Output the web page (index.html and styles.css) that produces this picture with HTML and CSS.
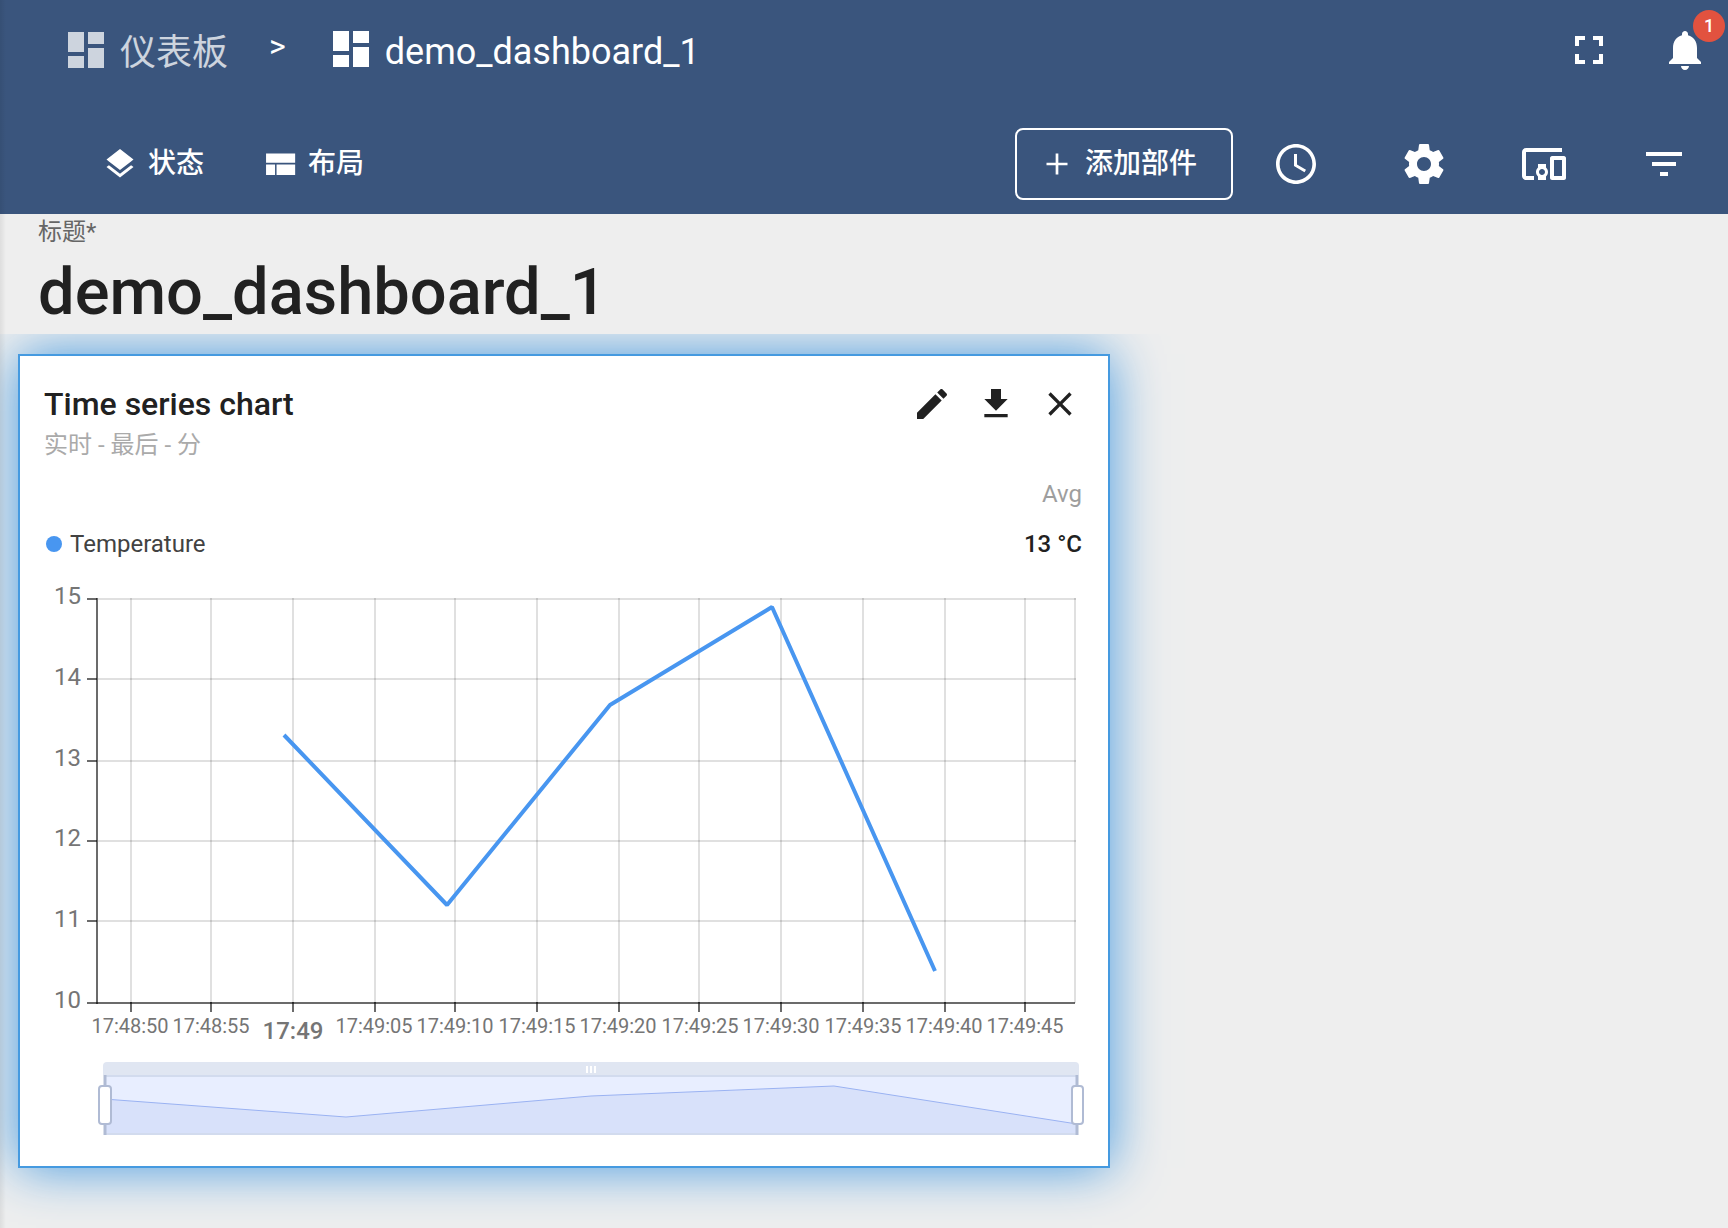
FILE: index.html
```html
<!DOCTYPE html>
<html lang="zh-CN">
<head>
<meta charset="utf-8">
<meta name="viewport" content="width=device-width, initial-scale=1">
<title>demo_dashboard_1</title>
<link rel="stylesheet" href="styles.css">
</head>
<body class="page">
<header class="header">
  <div class="topbar">
    <nav class="breadcrumb" aria-label="breadcrumb">
      <a class="crumb crumb-parent" href="#">
        <svg class="icon" viewBox="0 0 24 24"><path d="M3 13h8V3H3v10zm0 8h8v-6H3v6zm10 0h8V11h-8v10zm0-18v6h8V3h-8z"/></svg>
        <span class="crumb-text">仪表板</span>
      </a>
      <span class="crumb-separator">&gt;</span>
      <a class="crumb crumb-current" href="#">
        <svg class="icon" viewBox="0 0 24 24"><path d="M3 13h8V3H3v10zm0 8h8v-6H3v6zm10 0h8V11h-8v10zm0-18v6h8V3h-8z"/></svg>
        <span class="crumb-text">demo_dashboard_1</span>
      </a>
    </nav>
    <div class="top-actions">
      <button class="icon-button" type="button" aria-label="全屏">
        <svg class="icon" viewBox="0 0 24 24"><path d="M7 14H5v5h5v-2H7v-3zm-2-4h2V7h3V5H5v5zm12 7h-3v2h5v-5h-2v3zM14 5v2h3v3h2V5h-5z"/></svg>
      </button>
      <button class="icon-button" type="button" aria-label="通知">
        <svg class="icon" viewBox="0 0 24 24"><path d="M12 22c1.1 0 2-.9 2-2h-4c0 1.1.89 2 2 2zm6-6v-5c0-3.070-1.640-5.640-4.500-6.320V4c0-.83-.67-1.500-1.500-1.500s-1.500.67-1.500 1.500v.68C7.630 5.360 6 7.920 6 11v5l-2 2v1h16v-1l-2-2z"/></svg>
        <span class="badge">1</span>
      </button>
    </div>
  </div>
  <div class="toolbar">
    <div class="toolbar-left">
      <button class="text-button" type="button">
        <svg class="icon icon-small" viewBox="0 0 24 24"><path d="M11.990 18.540l-7.370-5.730L3 14.070l9 7 9-7-1.630-1.270-7.380 5.740zM12 16l7.360-5.730L21 9l-9-7-9 7 1.630 1.270L12 16z"/></svg>
        <span>状态</span>
      </button>
      <button class="text-button" type="button">
        <svg class="icon icon-small" viewBox="0 0 24 24"><path d="M2.700 5h19.400v6.200H2.700zM2.700 12.400h6v6.900h-6zM9.700 12.400h12.400v6.900H9.700z"/></svg>
        <span>布局</span>
      </button>
    </div>
    <div class="toolbar-right">
      <button class="add-button" type="button">
        <svg class="icon icon-small" viewBox="0 0 24 24"><path d="M19 12.900h-6.100V19h-1.800v-6.100H5v-1.800h6.100V5h1.800v6.100H19z"/></svg>
        <span>添加部件</span>
      </button>
      <div class="tools">
        <button class="icon-button icon-button-wide" type="button" aria-label="时间窗口">
          <svg class="icon" viewBox="0 0 24 24"><path d="M11.990 2C6.470 2 2 6.480 2 12s4.470 10 9.990 10C17.520 22 22 17.520 22 12S17.520 2 11.990 2zM12 20.200c-4.530 0-8.200-3.670-8.200-8.200S7.470 3.800 12 3.800s8.200 3.670 8.200 8.200-3.670 8.200-8.200 8.200zM12.500 7H11v6l5.250 3.150.75-1.230-4.500-2.670z"/></svg>
        </button>
        <button class="icon-button" type="button" aria-label="设置">
          <svg class="icon" viewBox="0 0 24 24"><path d="M19.430 12.980c.04-.32.07-.64.07-.98s-.03-.66-.07-.98l2.110-1.650c.19-.15.24-.42.12-.64l-2-3.460c-.12-.22-.39-.3-.61-.22l-2.490 1c-.52-.4-1.080-.73-1.690-.98l-.38-2.650C14.460 2.180 14.250 2 14 2h-4c-.25 0-.46.18-.49.42l-.38 2.650c-.61.25-1.170.59-1.690.98l-2.490-1c-.23-.09-.49 0-.61.22l-2 3.460c-.13.22-.07.49.12.64l2.110 1.650c-.04.32-.07.65-.07.98s.03.66.07.98l-2.110 1.650c-.19.15-.24.42-.12.64l2 3.460c.12.22.39.3.61.22l2.490-1c.52.4 1.080.73 1.690.98l.38 2.650c.03.24.24.42.49.42h4c.25 0 .46-.18.49-.42l.38-2.650c.61-.25 1.170-.59 1.690-.98l2.490 1c.23.09.49 0 .61-.22l2-3.460c.12-.22.07-.49-.12-.64l-2.110-1.650zM12 15.500c-1.930 0-3.500-1.570-3.500-3.500s1.570-3.500 3.500-3.500 3.500 1.570 3.500 3.500-1.570 3.500-3.500 3.500z"/></svg>
        </button>
        <button class="icon-button" type="button" aria-label="实体别名">
          <svg class="icon" viewBox="0 0 24 24"><path d="M3 6h18V4H3c-1.100 0-2 .9-2 2v12c0 1.100.9 2 2 2h4v-2H3V6zm10 6H9v1.780c-.61.55-1 1.330-1 2.220s.39 1.670 1 2.220V20h4v-1.780c.61-.55 1-1.340 1-2.220s-.39-1.670-1-2.220V12zm-2 5.500c-.83 0-1.500-.67-1.500-1.500s.67-1.500 1.500-1.500 1.500.67 1.500 1.500-.67 1.500-1.500 1.500zM22 8h-6c-.5 0-1 .5-1 1v10c0 .5.5 1 1 1h6c.5 0 1-.5 1-1V9c0-.5-.5-1-1-1zm-1 10h-4v-8h4v8z"/></svg>
        </button>
        <button class="icon-button" type="button" aria-label="过滤器">
          <svg class="icon" viewBox="0 0 24 24"><path d="M10 18h4v-2h-4v2zM3 6v2h18V6H3zm3 7h12v-2H6v2z"/></svg>
        </button>
      </div>
    </div>
  </div>
</header>

<main class="dashboard">
  <div class="title-field">
    <label class="title-label" for="dashboard-title">标题*</label>
    <input class="title-input" id="dashboard-title" type="text" value="demo_dashboard_1" required>
  </div>
  <div class="grid">
    <section class="widget">
      <div class="widget-header">
        <div class="widget-titles">
          <h2 class="widget-title">Time series chart</h2>
          <p class="widget-subtitle">实时 - 最后 - 分</p>
        </div>
        <div class="widget-actions">
          <button class="widget-button" type="button" aria-label="编辑">
            <svg class="icon icon-medium" viewBox="0 0 24 24"><path d="M3 17.250V21h3.750L17.810 9.940l-3.750-3.750L3 17.250zM20.710 7.040c.39-.39.39-1.020 0-1.410l-2.340-2.340c-.39-.39-1.020-.39-1.410 0l-1.830 1.830 3.750 3.750 1.830-1.830z"/></svg>
          </button>
          <button class="widget-button" type="button" aria-label="下载">
            <svg class="icon icon-medium" viewBox="0 0 24 24"><path d="M19 9h-4V3H9v6H5l7 7 7-7zM5 18v2h14v-2H5z"/></svg>
          </button>
          <button class="widget-button" type="button" aria-label="移除">
            <svg class="icon icon-medium" viewBox="0 0 24 24"><path d="M19 6.410L17.590 5 12 10.590 6.410 5 5 6.410 10.590 12 5 17.590 6.410 19 12 13.410 17.590 19 19 17.590 13.410 12z"/></svg>
          </button>
        </div>
      </div>
      <table class="legend">
        <thead>
          <tr><td></td><th class="legend-column" scope="col">Avg</th></tr>
        </thead>
        <tbody>
          <tr>
            <th class="legend-name" scope="row"><span class="legend-key"><span class="legend-dot"></span>Temperature</span></th>
            <td class="legend-value">13 °C</td>
          </tr>
        </tbody>
      </table>
      <svg class="chart" viewBox="0 0 1088 590" role="img" aria-label="Temperature">
        <path class="chart-grid" d="M78 23H1056M78 103H1056M78 185H1056M78 265H1056M78 345H1056"/>
        <path class="chart-grid" d="M111 22V427M191 22V427M273 22V427M355 22V427M435 22V427M517 22V427M599 22V427M679 22V427M761 22V427M843 22V427M925 22V427M1005 22V427M1055 22V427"/>
        <path class="chart-axis" d="M77 22V428"/>
        <path class="chart-axis" d="M77 427H1055"/>
        <path class="chart-axis" d="M67 23H77M67 103H77M67 185H77M67 265H77M67 345H77M67 427H77"/>
        <path class="chart-axis" d="M111 426V436M191 426V436M273 426V436M355 426V436M435 426V436M517 426V436M599 426V436M679 426V436M761 426V436M843 426V436M925 426V436M1005 426V436"/>
        <g class="chart-y-labels">
          <text x="61" y="28">15</text>
          <text x="61" y="109">14</text>
          <text x="61" y="190">13</text>
          <text x="61" y="270">12</text>
          <text x="61" y="351">11</text>
          <text x="61" y="432">10</text>
        </g>
        <g class="chart-x-labels">
          <text x="110" y="457">17:48:50</text>
          <text x="191" y="457">17:48:55</text>
          <text class="chart-x-major" x="273" y="463">17:49</text>
          <text x="354" y="457">17:49:05</text>
          <text x="435" y="457">17:49:10</text>
          <text x="517" y="457">17:49:15</text>
          <text x="598" y="457">17:49:20</text>
          <text x="680" y="457">17:49:25</text>
          <text x="761" y="457">17:49:30</text>
          <text x="843" y="457">17:49:35</text>
          <text x="924" y="457">17:49:40</text>
          <text x="1005" y="457">17:49:45</text>
        </g>
        <polyline class="chart-line" points="264,159 427,329 590,129 752,31 915,395"/>
        <path class="zoom-bar" d="M83 499v-9a4 4 0 0 1 4-4h968a4 4 0 0 1 4 4v9z"/>
        <rect class="zoom-body" x="84" y="500" width="974" height="58"/>
        <path class="zoom-area" d="M84 523L326 541L571 520L814 510L1057 548V558H84z"/>
        <polyline class="zoom-line" points="84,523 326,541 571,520 814,510 1057,548"/>
        <path class="zoom-border" d="M84 500H1058M84 558H1058"/>
        <path class="zoom-grip" d="M567 490v7M571 490v7M575 490v7"/>
        <path class="zoom-rod" d="M85 499V559M1057 499V559"/>
        <rect class="zoom-handle" x="79" y="510" width="12" height="38" rx="3"/>
        <rect class="zoom-handle" x="1052" y="510" width="11" height="38" rx="3"/>
      </svg>
    </section>
  </div>
</main>
</body>
</html>
```
FILE: styles.css
```css
* {
  box-sizing: border-box;
}

.page {
  position: relative;
  display: flex;
  flex-direction: column;
  min-height: 100vh;
  margin: 0;
  background: #eee;
  color: #212121;
  font-family: Roboto, "Noto Sans CJK SC", sans-serif;
  font-size: 24px;
}

/* soft edge cast by the collapsed side menu */
.page::before {
  content: "";
  position: absolute;
  inset: 0 auto 0 0;
  z-index: 1;
  width: 6px;
  background: linear-gradient(to right, rgba(0, 0, 0, 0.07), rgba(0, 0, 0, 0));
}

button {
  display: flex;
  align-items: center;
  padding: 0;
  border: 0;
  background: none;
  color: inherit;
  font: inherit;
}

.icon {
  display: block;
  flex: none;
  width: 48px;
  height: 48px;
  fill: currentColor;
}

.icon-small {
  width: 36px;
  height: 36px;
}

.icon-medium {
  width: 40px;
  height: 40px;
}

.header {
  display: flex;
  flex-direction: column;
  gap: 28px;
  padding-bottom: 14px;
  background: #3a557d;
  color: #fff;
}

.topbar {
  display: flex;
  align-items: center;
  justify-content: space-between;
  height: 100px;
  padding: 0 19px 0 62px;
}

.breadcrumb {
  display: flex;
  align-items: center;
  gap: 41px;
  font-size: 36px;
}

.crumb {
  display: flex;
  align-items: center;
  gap: 10px;
  color: inherit;
  line-height: 48px;
  text-decoration: none;
}

.crumb-parent {
  opacity: 0.75;
}

.crumb-current {
  padding-bottom: 2px;
}

.crumb-text {
  padding-top: 6px;
}

.crumb-separator {
  padding-bottom: 8px;
  font-size: 32px;
  line-height: 40px;
}

.top-actions {
  display: flex;
  gap: 48px;
}

.icon-button {
  position: relative;
  justify-content: center;
  width: 48px;
  height: 48px;
}

.icon-button-wide {
  width: 64px;
}

.badge {
  position: absolute;
  top: -16px;
  right: -16px;
  width: 32px;
  height: 32px;
  border-radius: 50%;
  background: #e2523f;
  font-size: 18px;
  font-weight: 500;
  line-height: 32px;
  text-align: center;
}

.toolbar {
  display: flex;
  align-items: center;
  justify-content: space-between;
  padding: 0 40px 0 102px;
  font-size: 28px;
  font-weight: 500;
  line-height: 36px;
}

.toolbar-left {
  display: flex;
  gap: 58px;
}

.text-button {
  gap: 10px;
}

.toolbar-right {
  display: flex;
  align-items: center;
  gap: 31px;
}

.add-button {
  gap: 10px;
  height: 72px;
  padding: 0 34px 0 22px;
  border: 2px solid #fff;
  border-radius: 8px;
}

.tools {
  display: flex;
  gap: 72px;
}

.dashboard {
  display: flex;
  flex: 1;
  flex-direction: column;
}

.title-field {
  display: flex;
  flex-direction: column;
  height: 120px;
  padding: 0 38px;
}

.title-label {
  color: #666;
  line-height: 36px;
}

.title-input {
  width: 100%;
  height: 84px;
  padding: 0;
  border: 0;
  outline: 0;
  background: none;
  color: #212121;
  font: 500 65px/84px Roboto, "Noto Sans CJK SC", sans-serif;
}

.grid {
  display: grid;
  flex: 1;
  grid-template-columns: 13fr 7fr;
  align-items: start;
  gap: 20px;
  padding: 20px 10px 60px 18px;
  overflow: hidden;
}

.widget {
  border: 2px solid #459ae0;
  background: #fff;
  box-shadow: 0 0 50px #459ae0;
}

.widget-header {
  display: flex;
  justify-content: space-between;
  padding: 28px 28px 0 24px;
}

.widget-titles {
  display: flex;
  flex-direction: column;
}

.widget-title {
  margin: 0;
  font-size: 32px;
  font-weight: 500;
  line-height: 40px;
}

.widget-subtitle {
  margin: 0;
  color: #aaa;
  line-height: 42px;
}

.widget-actions {
  display: flex;
  gap: 24px;
}

.widget-button {
  height: 40px;
}

.legend {
  width: 100%;
  margin: 3px 0 7px;
  border-collapse: collapse;
  line-height: 50px;
}

.legend th,
.legend td {
  padding: 0 26px;
  font-weight: 400;
  text-align: right;
}

.legend .legend-column {
  color: #9e9e9e;
}

.legend .legend-name {
  color: #424242;
  text-align: left;
}

.legend-key {
  display: flex;
  align-items: center;
  gap: 8px;
}

.legend-dot {
  width: 16px;
  height: 16px;
  border-radius: 50%;
  background: #4896f0;
}

.legend .legend-value {
  font-weight: 500;
}

.chart {
  display: block;
  width: 100%;
  font-size: 20px;
}

.chart-grid {
  fill: none;
  stroke: #000;
  stroke-opacity: 0.12;
  stroke-width: 2;
}

.chart-axis {
  fill: none;
  stroke: #000;
  stroke-opacity: 0.58;
  stroke-width: 2;
}

.chart-y-labels {
  fill: #757575;
  font-size: 24px;
  text-anchor: end;
}

.chart-x-labels {
  fill: #757575;
  text-anchor: middle;
}

.chart-x-major {
  font-size: 24px;
  font-weight: 500;
}

.chart-line {
  fill: none;
  stroke: #4896f0;
  stroke-width: 4;
  stroke-linejoin: bevel;
}

.zoom-bar {
  fill: #e0e6f2;
}

.zoom-body {
  fill: #e8eeff;
}

.zoom-area {
  fill: #d8e1fa;
}

.zoom-line {
  fill: none;
  stroke: #9ab2f2;
  stroke-width: 1;
}

.zoom-border {
  stroke: #d2dbee;
  stroke-width: 2;
}

.zoom-grip {
  stroke: #fff;
  stroke-width: 2;
}

.zoom-rod {
  stroke: #b0bbd4;
  stroke-width: 3;
}

.zoom-handle {
  fill: #fff;
  stroke: #b0bbd4;
  stroke-width: 2;
}
```
